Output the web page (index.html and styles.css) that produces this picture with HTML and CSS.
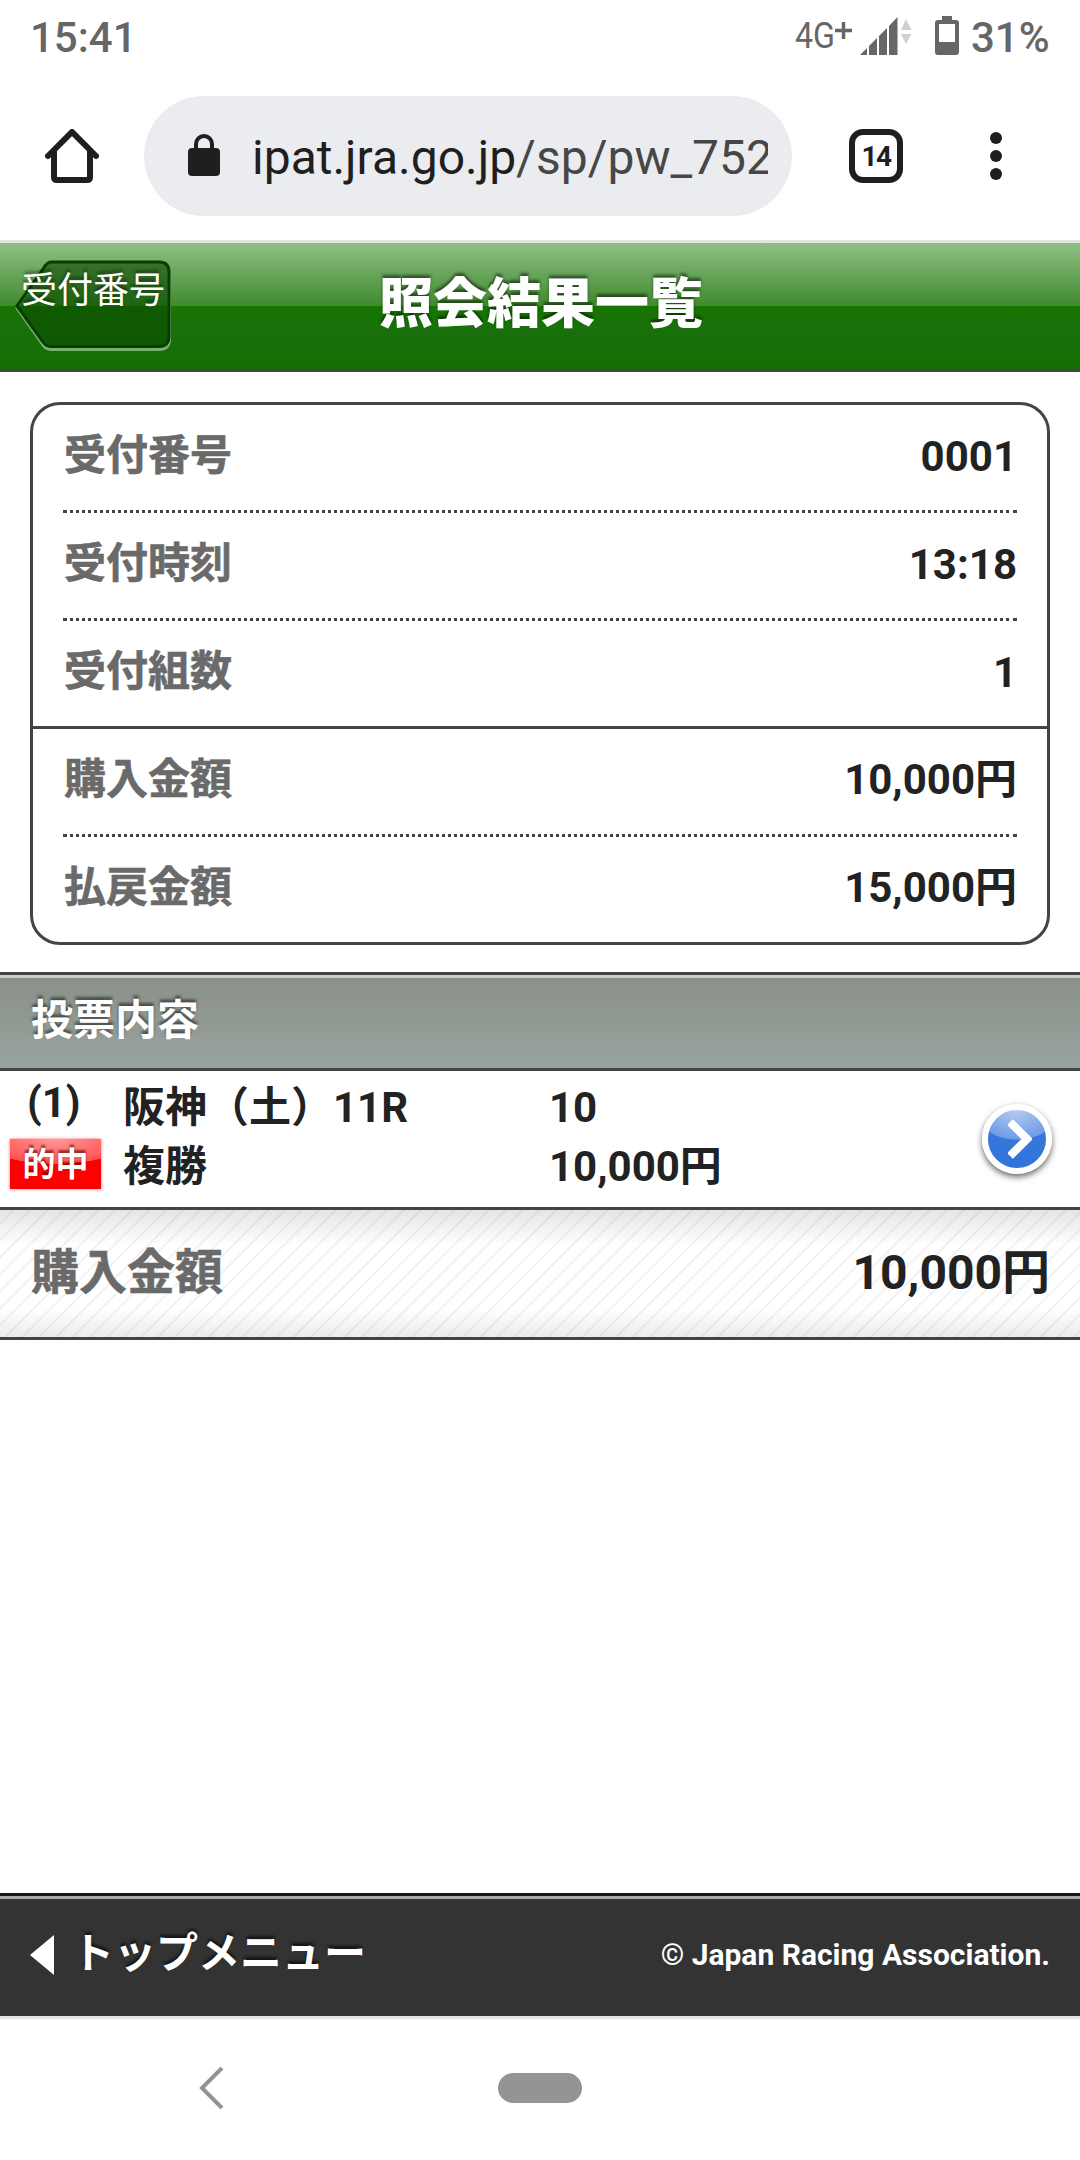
FILE: index.html
```
<!DOCTYPE html>
<html lang="ja">
  <head>
    <meta charset="UTF-8" />
    <meta name="viewport" content="width=device-width, initial-scale=1.0" />
    <title>照会結果一覧</title>
    <link rel="stylesheet" href="styles.css">
  </head>
  <body>
    <!-- Status bar -->
    <div class="status-bar">
      <span class="clock">15:41</span>
      <div class="status-icons">
        <span class="network">4G</span>
        <svg class="plus" width="17" height="17" viewBox="0 0 17 17"><path d="M8.500 0V17M0 8.500H17" stroke="#666" stroke-width="3.500" /></svg>
        <svg class="signal" width="52" height="38" viewBox="0 0 52 38">
          <path d="M0 38L7 31V38ZM9 38V29L17 21V38ZM19 38V19L27 11V38ZM29 38V9L37.500 0V38Z" fill="#666" />
          <path d="M41 13L46 2L51.500 13ZM41 17H51.500L46 27Z" fill="#d0d0d0" />
        </svg>
        <svg class="battery" width="24" height="40" viewBox="0 0 24 40">
          <path fill-rule="evenodd" d="M7 0H17V4H21Q24 4 24 7V36Q24 39 21 39H3Q0 39 0 36V7Q0 4 3 4H7ZM4 8V26H20V8Z" fill="#666" />
        </svg>
        <span class="percent">31%</span>
      </div>
    </div>

    <!-- Browser toolbar -->
    <div class="toolbar">
      <svg class="home" width="54" height="54" viewBox="0 0 54 54">
        <path d="M3 27L27 3L51 27M9 23V48Q9 51 12 51H42Q45 51 45 48V23" fill="none" stroke="#1f1f1f" stroke-width="6" stroke-linecap="round" />
      </svg>
      <div class="url-box">
        <svg class="lock" width="32" height="43" viewBox="0 0 32 43">
          <rect y="14" width="32" height="28" rx="4" fill="#1f1f1f" />
          <path d="M8 16V10A8 8 0 0 1 24 10V16" fill="none" stroke="#1f1f1f" stroke-width="4" />
        </svg>
        <span class="url">ipat.jra.go.jp<span class="path">/sp/pw_752</span></span>
      </div>
      <div class="tabs">14</div>
      <svg class="menu" width="12" height="48" viewBox="0 0 12 48" fill="#1f1f1f">
        <circle cx="6" cy="6" r="6" /><circle cx="6" cy="24" r="6" /><circle cx="6" cy="42" r="6" />
      </svg>
    </div>

    <!-- Page header -->
    <div class="header">
      <a class="back">
        <svg class="back-shape" width="157" height="92" viewBox="0 0 157 92">
          <path d="M36 4H144Q154.500 4 154.500 14V79Q154.500 89.500 144 89.500H36Q31 89.500 28 85L2 48L28 10Q32 4 36 4Z" fill="none" stroke="#79b06f" stroke-width="3" />
          <path d="M36 2H144Q154 2 154 12V76Q154 86.500 144 86.500H36Q31 86.500 28 82L2 46L28 9Q32 2 36 2Z" fill="#0a4a00" fill-opacity="0.6" stroke="#073f02" stroke-width="3" />
        </svg>
        <span class="back-text">受付番号</span>
      </a>
      <h1>照会結果一覧</h1>
    </div>

    <div class="content">
      <div class="card">
        <div class="group">
          <div class="row"><span class="label">受付番号</span><span class="value">0001</span></div>
          <div class="row"><span class="label">受付時刻</span><span class="value">13:18</span></div>
          <div class="row"><span class="label">受付組数</span><span class="value">1</span></div>
        </div>
        <div class="group">
          <div class="row"><span class="label">購入金額</span><span class="value">10,000円</span></div>
          <div class="row"><span class="label">払戻金額</span><span class="value">15,000円</span></div>
        </div>
      </div>

      <h2>投票内容</h2>

      <div class="bet">
        <div class="bet-no">
          <span class="no">(1)</span>
          <span class="hit">的中</span>
        </div>
        <div class="bet-race">
          <div>阪神（土）11R</div>
          <div>複勝</div>
        </div>
        <div class="bet-amount">
          <div>10</div>
          <div>10,000円</div>
        </div>
        <div class="arrow">
          <svg width="24" height="40" viewBox="0 0 24 40"><path d="M2 3L19 20L2 37" fill="none" stroke="#fff" stroke-width="8" /></svg>
        </div>
      </div>

      <div class="total">
        <span class="label">購入金額</span>
        <span class="value">10,000円</span>
      </div>
    </div>

    <div class="footer">
      <a class="top-menu">
        <svg width="24" height="40" viewBox="0 0 24 40"><path d="M24 0V40L0 20Z" fill="#fff" /></svg>
        <span>トップメニュー</span>
      </a>
      <span class="copyright">© Japan Racing Association.</span>
    </div>

    <!-- System navigation -->
    <div class="nav">
      <svg class="nav-back" width="26" height="44" viewBox="0 0 26 44"><path d="M24 2L4 22L24 42" fill="none" stroke="#949494" stroke-width="4" /></svg>
      <div class="nav-home"></div>
    </div>
  </body>
</html>
```
FILE: styles.css
```
* {
  box-sizing: border-box;
}
body {
  margin: 0;
  height: 2160px;
  display: flex;
  flex-direction: column;
  background: #fff;
  color: #222;
  font-family: Roboto, "Noto Sans CJK JP", sans-serif;
  overflow: hidden;
}
svg {
  display: block;
  flex: none;
}
h1,
h2 {
  margin: 0;
}

/* status bar */
.status-bar {
  height: 75px;
  padding: 0 31px 0 30px;
  display: flex;
  justify-content: space-between;
  color: #666;
  font-size: 42px;
  font-weight: 500;
  line-height: 75px;
}
.status-icons {
  display: flex;
}
.network {
  font-size: 37px;
  font-weight: 400;
  line-height: 72px;
  width: 40px;
  transform: scaleX(0.87);
  transform-origin: left;
}
.plus {
  margin-top: 22px;
}
.signal {
  margin: 17px 0 0 8px;
}
.battery {
  margin: 16px 12px 0 23px;
}
.percent {
  width: 78px;
  white-space: nowrap;
}

/* browser toolbar */
.toolbar {
  height: 165px;
  padding: 0 78px 3px 45px;
  display: flex;
  align-items: center;
}
.url-box {
  width: 648px;
  height: 120px;
  margin: 0 57px 0 45px;
  padding: 0 24px 0 44px;
  border-radius: 60px;
  background: #ebecf0;
  display: flex;
  align-items: center;
}
.url {
  flex: 1;
  margin-left: 32px;
  padding-top: 2px;
  overflow: hidden;
  white-space: nowrap;
  font-size: 48px;
  color: #1f1f1f;
}
.path {
  color: #474747;
}
.lock {
  margin-bottom: 1px;
}
.tabs {
  width: 54px;
  height: 54px;
  border: 6px solid #1f1f1f;
  border-radius: 14px;
  color: #1f1f1f;
  font-size: 28px;
  font-weight: 700;
  letter-spacing: -1.5px;
  line-height: 44px;
  text-align: center;
}
.menu {
  margin-left: 87px;
}

/* page header */
.header {
  position: relative;
  height: 132px;
  border-top: 3px solid #dfe5de;
  border-bottom: 3px solid #444;
  background: linear-gradient(#8fc085 0%, #67a55a 25%, #3f8b2c 50%, #177600 50%, #18700c 70%, #166d00 100%);
}
h1 {
  padding-left: 2px;
  color: #fff;
  font-size: 54px;
  font-weight: 900;
  line-height: 124px;
  text-align: center;
  text-shadow: 0 -3px 3px rgba(0, 0, 0, 0.5);
}
.back {
  position: absolute;
  left: 15px;
  top: 17px;
}
.back-text {
  position: absolute;
  left: 6px;
  top: 8px;
  color: #fff;
  font-size: 36px;
  line-height: 46px;
  white-space: nowrap;
  text-shadow: 0 -3px 3px rgba(0, 0, 0, 0.4);
}

/* summary card */
.content {
  flex: 1;
}
.card {
  margin: 30px 30px 27px;
  border: 3px solid #444;
  border-radius: 30px;
}
.group {
  padding: 0 30px;
}
.group + .group {
  border-top: 3px solid #444;
}
.row {
  height: 105px;
  display: flex;
  justify-content: space-between;
  font-size: 42px;
  font-weight: 700;
  line-height: 104px;
}
.row .label {
  padding-left: 1px;
  line-height: 102px;
}
.group + .group .value {
  line-height: 102px;
}
.row + .row {
  height: 108px;
  border-top: 3px dotted #444;
}
.label {
  color: #6a6a6a;
  -webkit-text-stroke: 0.6px #6a6a6a;
}

/* bets */
h2 {
  height: 99px;
  padding-left: 31px;
  border-top: 3px solid #444;
  border-bottom: 3px solid #444;
  box-shadow: inset 0 3px #ccc;
  background: linear-gradient(#8a908a, #99a39d);
  color: #fff;
  font-size: 42px;
  line-height: 92px;
  text-shadow: 0 -3px 3px rgba(0, 0, 0, 0.5);
}
.bet {
  height: 139px;
  padding: 7px 28px 0 0;
  border-bottom: 3px solid #444;
  display: flex;
  font-size: 42px;
  font-weight: 700;
  line-height: 59px;
}
.bet-no {
  width: 123px;
}
.no {
  display: block;
  height: 61px;
  padding-left: 27px;
  line-height: 50px;
}
.hit {
  display: block;
  width: 91px;
  height: 50px;
  margin-left: 10px;
  background: radial-gradient(ellipse 75px 25px at 50% 0, #ff9a9a, #ff5050 98%, transparent 100%), #f00;
  box-shadow: 0 0 3px rgba(255, 0, 0, 0.6);
  color: #fff;
  font-size: 33px;
  line-height: 51px;
  text-align: center;
  text-shadow: 0 -3px 2px rgba(90, 0, 0, 0.6);
}
.bet-race {
  width: 426px;
}
.arrow {
  width: 70px;
  height: 70px;
  margin: 26px 0 0 auto;
  padding-left: 6px;
  border: 6px solid #fff;
  border-radius: 50%;
  background: radial-gradient(ellipse 42px 30px at 50% 0, #b5ccf2, #6e9ce6 97%, transparent 100%), linear-gradient(#3f79d8, #2f74dc);
  box-shadow: 0 3px 6px rgba(0, 0, 0, 0.6);
  display: flex;
  align-items: center;
  justify-content: center;
}
.total {
  height: 130px;
  padding: 0 30px 12px 31px;
  border-bottom: 3px solid #444;
  background: linear-gradient(rgba(0, 0, 0, 0.1), transparent 28%, transparent 78%, rgba(0, 0, 0, 0.08)),
    repeating-linear-gradient(135deg, #fff 0 8px, #f1f1f1 9px 10px, #fff 11px 12px);
  display: flex;
  align-items: center;
  justify-content: space-between;
  font-size: 48px;
  font-weight: 700;
}

/* footer */
.footer {
  height: 126px;
  padding: 0 30px 3px;
  border-top: 3px solid #161616;
  border-bottom: 3px solid #e4e4e4;
  box-shadow: inset 0 3px #aaa;
  background: #333;
  color: #fff;
  font-weight: 700;
  display: flex;
  align-items: center;
  justify-content: space-between;
}
.top-menu {
  display: flex;
  align-items: center;
  font-size: 42px;
  line-height: 60px;
  text-shadow: 0 -3px 3px rgba(0, 0, 0, 0.6);
}
.top-menu span {
  margin-left: 18px;
  padding-bottom: 1px;
}
.copyright {
  font-size: 30px;
}
.nav {
  height: 141px;
  padding: 0 0 4px 198px;
  display: flex;
  align-items: center;
}
.nav-home {
  width: 84px;
  height: 30px;
  margin-left: 274px;
  border-radius: 15px;
  background: #949494;
}
```
